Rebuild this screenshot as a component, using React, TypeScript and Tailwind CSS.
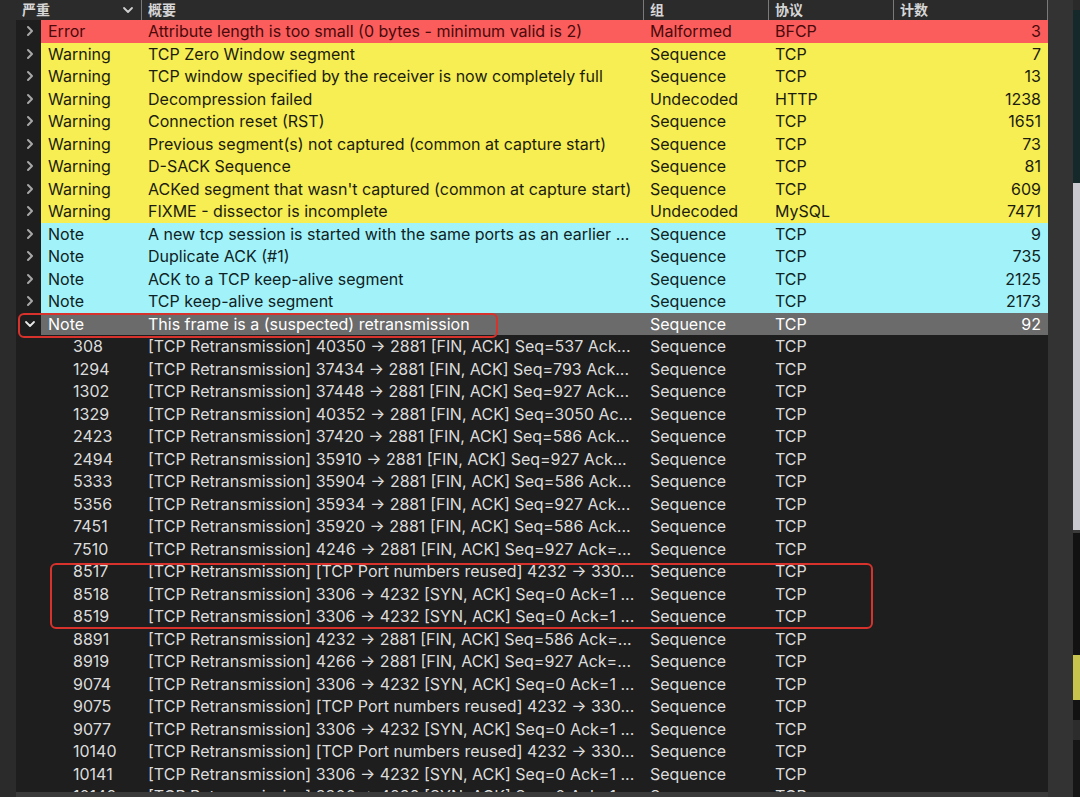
import React from "react";

type Row = { sev: string; sum: string; grp: string; proto: string; count: string; kind: "error" | "warn" | "note" | "sel" };

const top: Row[] = [
  { sev: "Error", sum: "Attribute length is too small (0 bytes - minimum valid is 2)", grp: "Malformed", proto: "BFCP", count: "3", kind: "error" },
  { sev: "Warning", sum: "TCP Zero Window segment", grp: "Sequence", proto: "TCP", count: "7", kind: "warn" },
  { sev: "Warning", sum: "TCP window specified by the receiver is now completely full", grp: "Sequence", proto: "TCP", count: "13", kind: "warn" },
  { sev: "Warning", sum: "Decompression failed", grp: "Undecoded", proto: "HTTP", count: "1238", kind: "warn" },
  { sev: "Warning", sum: "Connection reset (RST)", grp: "Sequence", proto: "TCP", count: "1651", kind: "warn" },
  { sev: "Warning", sum: "Previous segment(s) not captured (common at capture start)", grp: "Sequence", proto: "TCP", count: "73", kind: "warn" },
  { sev: "Warning", sum: "D-SACK Sequence", grp: "Sequence", proto: "TCP", count: "81", kind: "warn" },
  { sev: "Warning", sum: "ACKed segment that wasn't captured (common at capture start)", grp: "Sequence", proto: "TCP", count: "609", kind: "warn" },
  { sev: "Warning", sum: "FIXME - dissector is incomplete", grp: "Undecoded", proto: "MySQL", count: "7471", kind: "warn" },
  { sev: "Note", sum: "A new tcp session is started with the same ports as an earlier ...", grp: "Sequence", proto: "TCP", count: "9", kind: "note" },
  { sev: "Note", sum: "Duplicate ACK (#1)", grp: "Sequence", proto: "TCP", count: "735", kind: "note" },
  { sev: "Note", sum: "ACK to a TCP keep-alive segment", grp: "Sequence", proto: "TCP", count: "2125", kind: "note" },
  { sev: "Note", sum: "TCP keep-alive segment", grp: "Sequence", proto: "TCP", count: "2173", kind: "note" },
  { sev: "Note", sum: "This frame is a (suspected) retransmission", grp: "Sequence", proto: "TCP", count: "92", kind: "sel" },
];

const R = "[TCP Retransmission]";
const kids: [string, string][] = [
  ["308", `${R} 40350 → 2881 [FIN, ACK] Seq=537 Ack...`],
  ["1294", `${R} 37434 → 2881 [FIN, ACK] Seq=793 Ack...`],
  ["1302", `${R} 37448 → 2881 [FIN, ACK] Seq=927 Ack...`],
  ["1329", `${R} 40352 → 2881 [FIN, ACK] Seq=3050 Ac...`],
  ["2423", `${R} 37420 → 2881 [FIN, ACK] Seq=586 Ack...`],
  ["2494", `${R} 35910 → 2881 [FIN, ACK] Seq=927 Ack...`],
  ["5333", `${R} 35904 → 2881 [FIN, ACK] Seq=586 Ack...`],
  ["5356", `${R} 35934 → 2881 [FIN, ACK] Seq=927 Ack...`],
  ["7451", `${R} 35920 → 2881 [FIN, ACK] Seq=586 Ack...`],
  ["7510", `${R} 4246 → 2881 [FIN, ACK] Seq=927 Ack=...`],
  ["8517", `${R} [TCP Port numbers reused] 4232 → 330...`],
  ["8518", `${R} 3306 → 4232 [SYN, ACK] Seq=0 Ack=1 ...`],
  ["8519", `${R} 3306 → 4232 [SYN, ACK] Seq=0 Ack=1 ...`],
  ["8891", `${R} 4232 → 2881 [FIN, ACK] Seq=586 Ack=...`],
  ["8919", `${R} 4266 → 2881 [FIN, ACK] Seq=927 Ack=...`],
  ["9074", `${R} 3306 → 4232 [SYN, ACK] Seq=0 Ack=1 ...`],
  ["9075", `${R} [TCP Port numbers reused] 4232 → 330...`],
  ["9077", `${R} 3306 → 4232 [SYN, ACK] Seq=0 Ack=1 ...`],
  ["10140", `${R} [TCP Port numbers reused] 4232 → 330...`],
  ["10141", `${R} 3306 → 4232 [SYN, ACK] Seq=0 Ack=1 ...`],
  ["10142", `${R} 3306 → 4232 [SYN, ACK] Seq=0 Ack=1 ...`],
];

const bgFor: Record<Row["kind"], string> = {
  error: "bg-[#fb5d5d] text-[#4a0a0a]",
  warn: "bg-[#f6ee52] text-[#1c1c10]",
  note: "bg-[#a2f3f9] text-[#0f2224]",
  sel: "bg-[#6b6b6b] text-white",
};

const ChevRight = () => (
  <svg width="10" height="14" viewBox="0 0 10 14" fill="none" stroke="#a8a8a8" strokeWidth="2" strokeLinecap="round" strokeLinejoin="round">
    <path d="M3 3l4 4-4 4" />
  </svg>
);
const ChevDown = ({ c = "#e8e8e8" }: { c?: string }) => (
  <svg width="12" height="10" viewBox="0 0 12 10" fill="none" stroke={c} strokeWidth="1.8" strokeLinecap="round" strokeLinejoin="round">
    <path d="M2 3l4 4 4-4" />
  </svg>
);

const GRID = "grid grid-cols-[25px_100px_502px_125px_125px_155px]";

export default function App() {
  return (
    <div
      className="relative flex h-[797px] w-[1080px] overflow-hidden bg-[#2a2a2a] text-[16px] leading-none"
      style={{ fontFamily: 'Inter, "Liberation Sans", "Noto Sans CJK SC", sans-serif' }}
    >
      <div className="w-[16px] shrink-0 bg-[#2b2b2b]" />
      <div className="flex w-[1032px] shrink-0 flex-col bg-[#1e1e1e]">
        {/* header */}
        <div className={`${GRID} h-[20px] shrink-0 items-center bg-[#2b2b2b] text-[14px] text-[#d6d6d6]`}>
          <div className="col-span-2 flex items-center justify-between pl-[6px] pr-[7px]">
            <span className="font-semibold">严重</span>
            <ChevDown c="#cfcfcf" />
          </div>
          <div className="flex h-full items-center border-l border-[#7a7a7a] pl-[6px] font-semibold">概要</div>
          <div className="flex h-full items-center border-l border-[#7a7a7a] pl-[6px] font-semibold">组</div>
          <div className="flex h-full items-center border-l border-[#7a7a7a] pl-[6px] font-semibold">协议</div>
          <div className="flex h-full items-center border-x border-[#7a7a7a] pl-[6px] font-semibold">计数</div>
        </div>
        {/* body */}
        <div className="h-[772px] shrink-0 overflow-hidden">
          {top.map((r, i) => (
            <div key={i} className={`${GRID} h-[22.5px] items-center`}>
              <div className="flex h-full items-center justify-center bg-[#1e1e1e] pl-[2px]">
                {r.kind === "sel" ? <ChevDown /> : <ChevRight />}
              </div>
              <div className={`col-span-5 grid h-full grid-cols-[100px_502px_125px_125px_155px] items-center ${bgFor[r.kind]}`}>
                <span className="pl-[7px]">{r.sev}</span>
                <span className="whitespace-nowrap pl-[7px]">{r.sum}</span>
                <span className="pl-[7px]">{r.grp}</span>
                <span className="pl-[7px]">{r.proto}</span>
                <span className="pr-[7px] text-right">{r.count}</span>
              </div>
            </div>
          ))}
          {kids.map(([n, s], i) => (
            <div key={"k" + i} className={`${GRID} h-[22.5px] items-center text-[#dcdcdc]`}>
              <div />
              <span className="pl-[32px]">{n}</span>
              <span className="whitespace-nowrap pl-[7px]">{s}</span>
              <span className="pl-[7px]">Sequence</span>
              <span className="pl-[7px]">TCP</span>
              <span />
            </div>
          ))}
        </div>
        <div className="flex-1 bg-[#3a3a3a]" />
      </div>
      <div className="w-[25px] shrink-0 bg-[#333333]" />
      <div className="flex w-[7px] shrink-0 flex-col">
        <div className="h-[10px] bg-[#2a2a2a]" />
        <div className="h-[173px] bg-[#16292a]" />
        <div className="h-[347px] bg-[#c9c9cf]" />
        <div className="h-[3px] bg-[#3a3a3a]" />
        <div className="h-[122px] bg-[#121212]" />
        <div className="h-[45px] bg-[#c6c44c]" />
        <div className="h-[20px] bg-[#121212]" />
        <div className="h-[20px] bg-[#2c2c2c]" />
        <div className="flex-1 bg-[#161616]" />
      </div>

      {/* red highlight boxes */}
      <div className="pointer-events-none absolute left-[18px] top-[313px] h-[25px] w-[480px] rounded-[6px] border-2 border-[#d8322c]" />
      <div className="pointer-events-none absolute left-[50px] top-[563px] h-[66px] w-[823px] rounded-[6px] border-2 border-[#d8322c]" />
    </div>
  );
}
